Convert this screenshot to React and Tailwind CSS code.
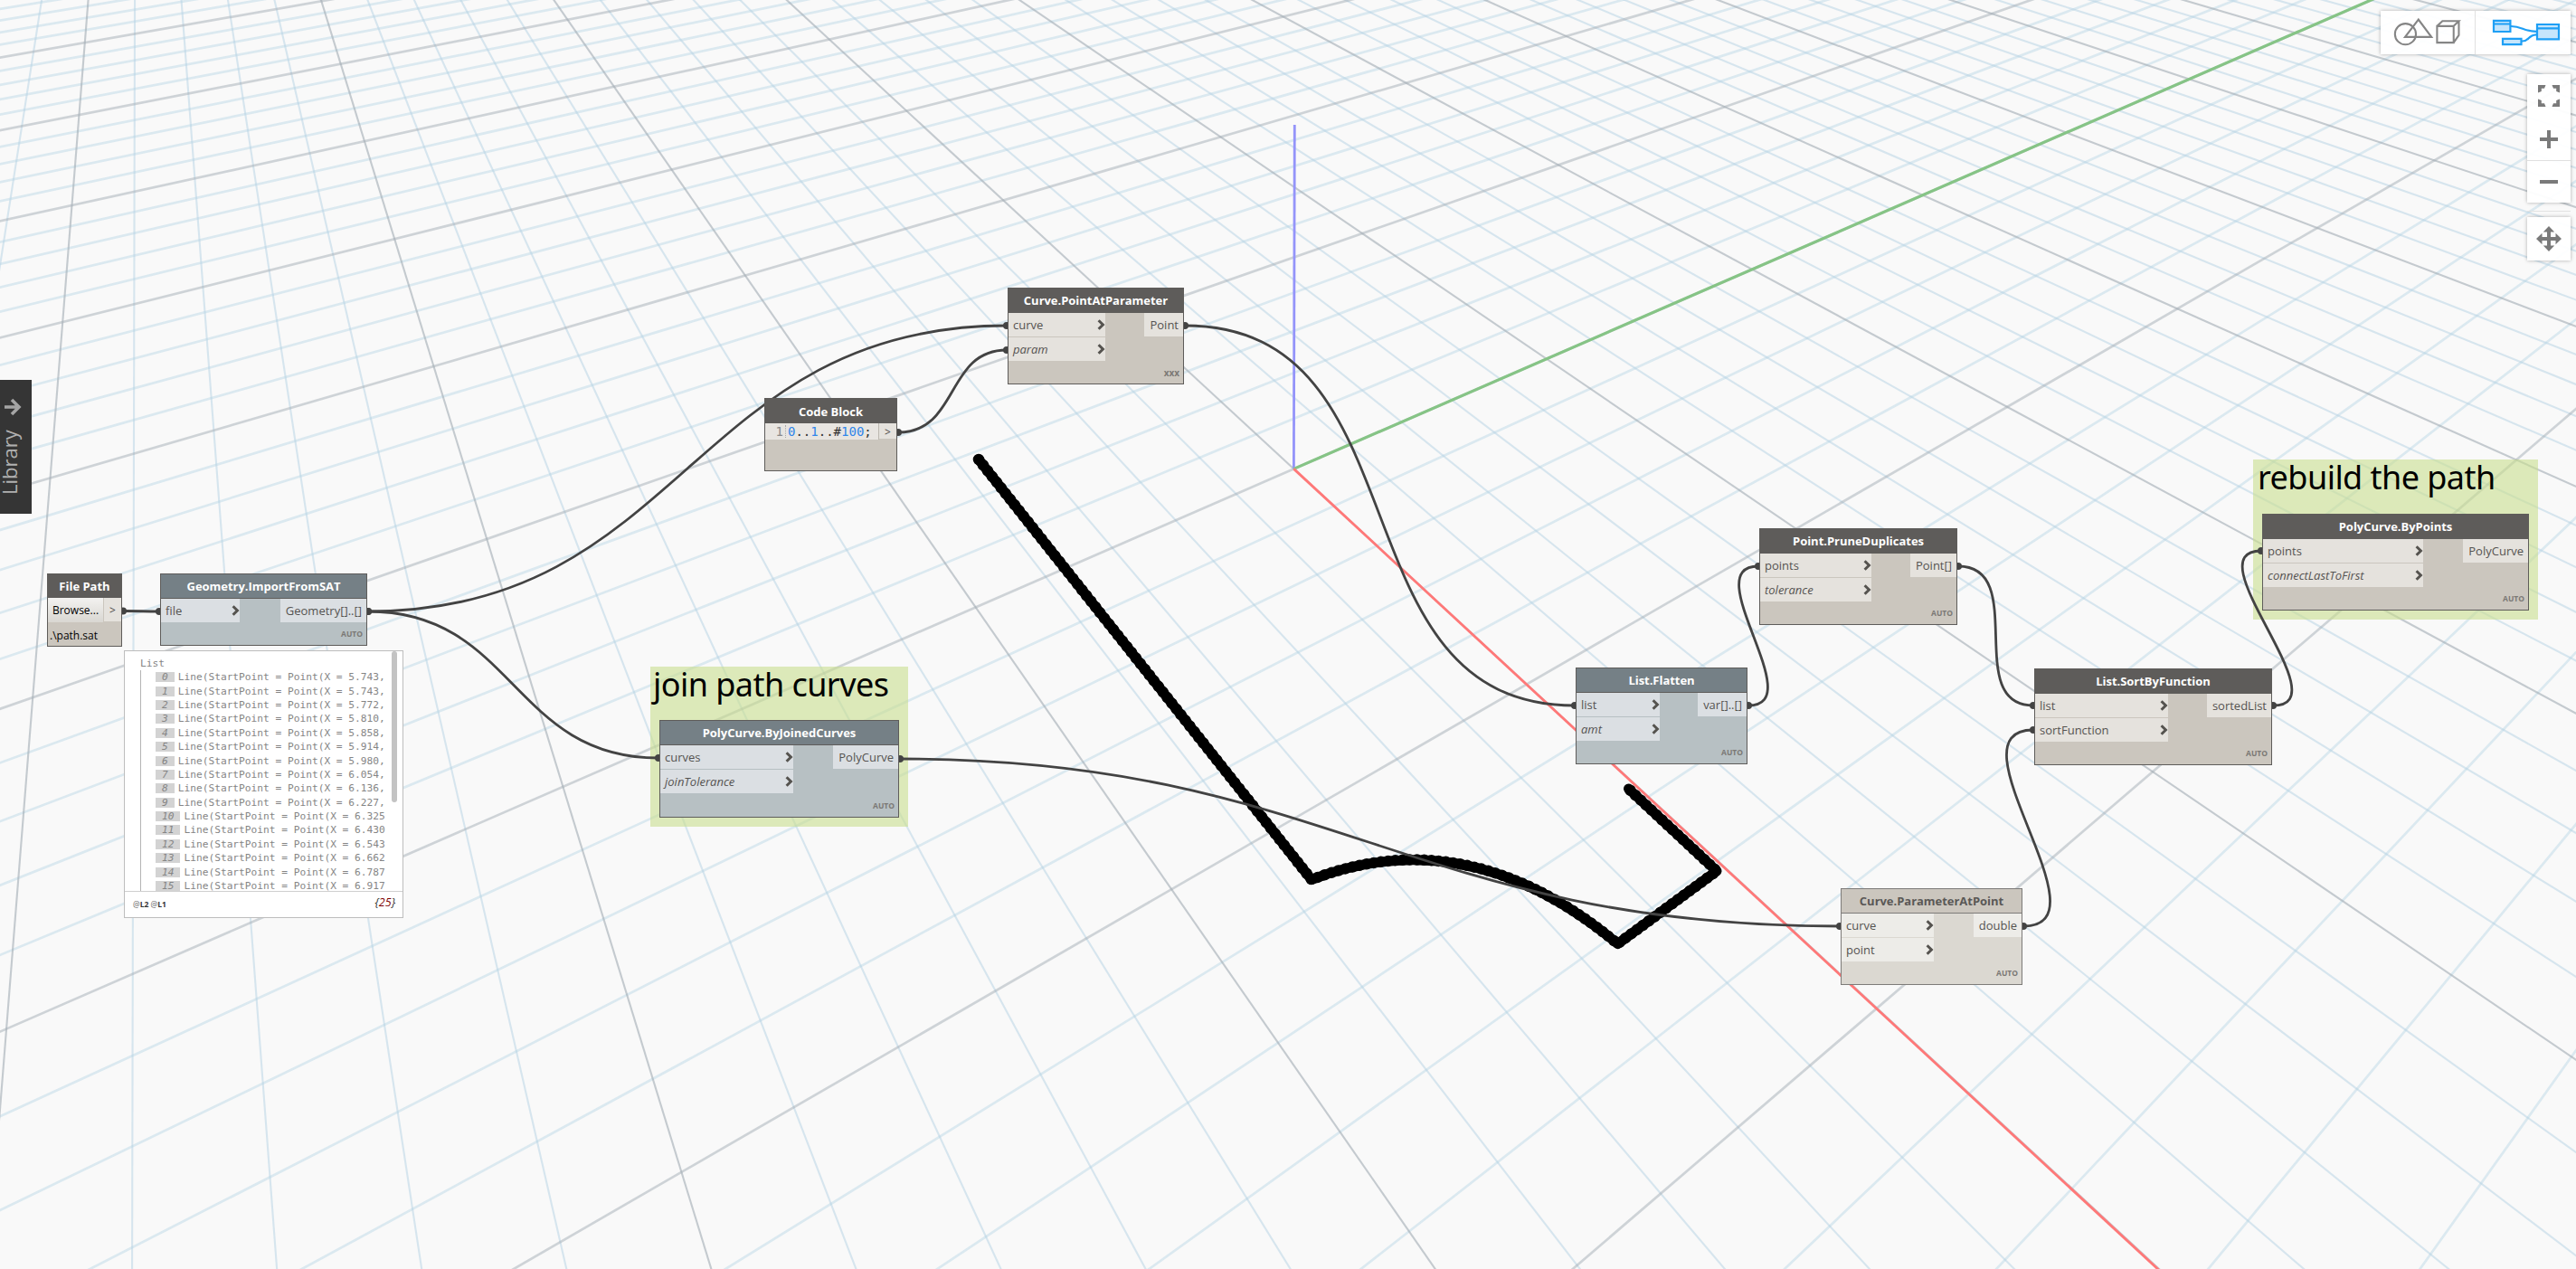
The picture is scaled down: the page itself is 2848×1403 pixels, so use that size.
import React from "react";

/* ---------- perspective ground grid ---------- */
const O = [1430.4, 518.4];
const U = { x: -5.04, y: 22.28, w: -0.0335 };
const V = { x: 95.05, y: -15.227, w: 0.0229 };

function ray(px, py, vx, vy) {
  const k = 30;
  return { x1: vx, y1: vy, x2: vx + (px - vx) * k, y2: vy + (py - vy) * k };
}

function buildGrid() {
  const lines = [];
  const vpU = [U.x / U.w, U.y / U.w];
  const vpV = [V.x / V.w, V.y / V.w];
  for (let i = -80; i <= 80; i++) {
    const major = i % 5 === 0;
    const u = (-V.w * i) / U.w;
    lines.push({
      ...ray(O[0] + U.x * u + V.x * i, O[1] + U.y * u + V.y * i, vpU[0], vpU[1]),
      major,
      width: 2.1,
      opacity: major ? 0.62 : 0.5,
      id: "v" + i,
    });
    const v = (-U.w * i) / V.w;
    lines.push({
      ...ray(O[0] + U.x * i + V.x * v, O[1] + U.y * i + V.y * v, vpV[0], vpV[1]),
      major,
      width: 2.7,
      opacity: major ? 0.5 : 0.43,
      id: "u" + i,
    });
  }
  return lines;
}

const GRID = buildGrid();
const SEGMENTS = GRID.filter((l) => !l.major).concat(GRID.filter((l) => l.major));

const TOOLPATH =
  "M1082 508L1450 972.5C1545 936 1660 936 1788.500 1043.500L1898 963L1800.500 872";

const WIRES = [
  [136, 675.5, 176, 676],
  [407, 676, 1113, 360],
  [407, 676, 728, 838],
  [995, 839, 2034, 1024],
  [993, 478, 1113, 387],
  [1310, 360, 1741, 780],
  [1933, 780, 1944, 626],
  [2165, 626, 2248, 780],
  [2237, 1024, 2248, 807],
  [2513, 780, 2500, 609],
];

function wirePath([x1, y1, x2, y2]) {
  const k = 0.45 * Math.hypot(x2 - x1, y2 - y1);
  return `M${x1} ${y1}C${x1 + k} ${y1} ${x2 - k} ${y2} ${x2} ${y2}`;
}

function Scene() {
  return (
    <svg className="absolute inset-0" width="2848" height="1403" viewBox="0 0 2848 1403">
      {SEGMENTS.map((l) => (
        <line
          key={l.id}
          x1={l.x1}
          y1={l.y1}
          x2={l.x2}
          y2={l.y2}
          stroke={l.major ? "#a3adb5" : "#b3d2e3"}
          strokeOpacity={l.opacity}
          strokeWidth={l.width}
        />
      ))}
      <line x1="1431.3" y1="138" x2="1430.4" y2="518" stroke="#9494fa" strokeWidth="2.8" />
      <line x1="1430.4" y1="518.4" x2="2626" y2="-2" stroke="#86c486" strokeWidth="3.2" />
      <line x1="1430.4" y1="518.4" x2="2391" y2="1408" stroke="#ff7878" strokeWidth="2.8" />
      <g fill="none" stroke="#000" strokeLinecap="round" strokeLinejoin="round">
        <path d={TOOLPATH} strokeWidth="11" />
        <path d={TOOLPATH} strokeWidth="12.5" strokeDasharray="0 8" />
      </g>
    </svg>
  );
}

function Wires() {
  return (
    <svg className="absolute inset-0" width="2848" height="1403" viewBox="0 0 2848 1403">
      {WIRES.map((w, i) => (
        <g key={i}>
          <path d={wirePath(w)} fill="none" stroke="#434343" strokeWidth="2.8" />
          <circle cx={w[0]} cy={w[1]} r="4" fill="#434343" />
          <circle cx={w[2]} cy={w[3]} r="4" fill="#434343" />
        </g>
      ))}
    </svg>
  );
}

/* ---------- nodes ---------- */
const TONES = {
  dark: {
    frame: "border-[#5e5c5a] bg-[#cbc6be]",
    head: "bg-[#5e5c5a] text-white border-[#5e5c5a]",
    port: "bg-[#e5e2dd]",
  },
  slate: {
    frame: "border-[#5e5c5a] bg-[#b7c0c3]",
    head: "bg-[#758086] text-white border-[#5e5c5a]",
    port: "bg-[#dbdfe3]",
  },
  pale: {
    frame: "border-[#7d7b79] bg-[#dbd8d1]",
    head: "bg-[#cbc6be] text-[#5a5856] border-[#7d7b79]",
    port: "bg-[#edece8]",
  },
};

function Chevron() {
  return (
    <svg width="9" height="12" viewBox="0 0 9 12" className="mt-[-1px] shrink-0">
      <path d="M1.6 1.2L6.4 6L1.6 10.8" fill="none" stroke="#55534f" strokeWidth="3" />
    </svg>
  );
}

function Node({ pos, tone = "dark", title, inputs, inW, output, lacing = "AUTO" }) {
  const t = TONES[tone];
  return (
    <section className={`absolute flex flex-col border ${pos} ${t.frame}`}>
      <h2
        className={`flex h-[27px] shrink-0 items-center justify-center border-b pt-px text-[13px] font-bold leading-none tracking-[-0.03px] whitespace-nowrap ${t.head}`}
      >
        {title}
      </h2>
      <div className="flex items-start justify-between text-[13px] leading-none text-[#555351]">
        <div className={`flex flex-col gap-px ${inW}`}>
          {inputs.map((p) => (
            <div key={p.name} className={`flex h-[26px] items-center justify-between pl-[5px] ${t.port}`}>
              <span className={p.opt ? "pt-px italic" : "pt-px"}>{p.name}</span>
              <Chevron />
            </div>
          ))}
        </div>
        <div className={`flex h-[26px] items-center pr-[5px] pl-[6px] pt-px ${t.port}`}>{output}</div>
      </div>
      <div
        className={`mt-auto flex h-[24px] items-center justify-end pr-1 font-bold text-[#7b7975] ${
          lacing === "AUTO" ? "text-[8.5px]" : "text-[10px]"
        }`}
      >
        {lacing}
      </div>
    </section>
  );
}

const Group = ({ pos, children }) => (
  <div
    className={`absolute bg-[#c8dd8e]/60 font-['Noto_Sans',sans-serif] text-[36px] leading-[39px] tracking-[-0.55px] whitespace-nowrap text-black ${pos}`}
  >
    {children}
  </div>
);

const VALUES = [
  "5.743,", "5.743,", "5.772,", "5.810,", "5.858,", "5.914,", "5.980,", "6.054,",
  "6.136,", "6.227,", "6.325", "6.430", "6.543", "6.662", "6.787", "6.917",
];

function Preview() {
  return (
    <aside className="absolute left-[137px] top-[719px] flex h-[296px] w-[309px] flex-col border border-[#bdbdbd] bg-white font-['DejaVu_Sans_Mono',monospace] text-[11.2px] text-[#858585]">
      <div className="flex h-[266px] justify-between overflow-hidden border-b border-[#cfcfcf] pl-[17px] pr-[6px]">
        <div className="pt-[6px]">
          <div className="h-[15px] leading-[15px]">List</div>
          <div className="h-[244px] border-l border-[#b4b4b4] pl-4">
            {VALUES.map((v, i) => (
              <div key={i} className="flex h-[15.4px] items-center leading-[15px] whitespace-pre">
                <span className="mr-[4px] flex h-[11px] items-center bg-[#d3d3d3] px-[7px] italic">{i}</span>
                {"Line(StartPoint = Point(X = " + v}
              </div>
            ))}
          </div>
        </div>
        <div className="h-[167px] w-[6px] rounded-full bg-[#c3c3c3]" />
      </div>
      <div className="flex flex-1 items-center justify-between pr-[8px] pl-[9px] font-['Open_Sans',sans-serif]">
        <span className="text-[8.5px] font-bold text-[#333]">
          <span className="font-normal text-[#666]">@</span>L2 <span className="font-normal text-[#666]">@</span>L1
        </span>
        <span className="pb-[3px] text-[12.5px] italic text-[#333]">
          {"{"}
          <span className="text-[#7d0000]">25</span>
          {"}"}
        </span>
      </div>
    </aside>
  );
}

function FilePath() {
  return (
    <section className="absolute left-[52px] top-[634px] flex h-[81px] w-[83px] flex-col border border-[#5e5c5a] bg-[#cbc6be]">
      <h2 className="flex h-[26px] items-center justify-center bg-[#5e5c5a] text-[13px] font-bold leading-none text-white">
        File Path
      </h2>
      <div className="flex h-[27px] gap-px">
        <button className="h-[27px] w-[61px] bg-linear-to-b from-[#f3f2f0] to-[#d9d7d2] text-[12px] leading-none text-black">
          Browse...
        </button>
        <div className="flex h-[26px] flex-1 items-center justify-center bg-[#e5e2dd] pt-[2px] text-[12px] leading-none text-[#4a4846]">
          &gt;
        </div>
      </div>
      <div className="pl-[2px] pt-[6px] text-[12px] leading-[18px] text-black">.\path.sat</div>
    </section>
  );
}

function CodeBlock() {
  return (
    <section className="absolute left-[845px] top-[440px] flex h-[81px] w-[147px] flex-col border border-[#5e5c5a] bg-[#cbc6be]">
      <h2 className="flex h-[27px] items-center justify-center bg-[#5e5c5a] pt-[2px] text-[13px] font-bold leading-none text-white">
        Code Block
      </h2>
      <div className="flex items-start">
        <div className="flex h-[18px] w-[126px] items-center border-r border-[#bbb7b0] bg-[#e8e5e1] font-['DejaVu_Sans_Mono',monospace] text-[14px] leading-none text-[#333]">
          <span className="w-[23px] border-r border-dotted border-[#aaa] pr-[2px] text-right text-[#8a8a8a]">1</span>
          <span className="pl-[2px] whitespace-pre">
            <span className="text-[#2f86ea]">0</span>..<span className="text-[#2f86ea]">1</span>..#
            <span className="text-[#2f86ea]">100</span>;
          </span>
        </div>
        <div className="flex h-[17px] flex-1 items-center justify-center bg-[#e5e2dd] pt-[2px] text-[12px] leading-none text-[#4a4846]">
          &gt;
        </div>
      </div>
    </section>
  );
}

/* ---------- chrome ---------- */
function LibraryTab() {
  return (
    <div className="absolute left-0 top-[420px] flex h-[148px] w-[35px] flex-col items-start bg-[#353535] pt-[20px]">
      <svg width="20" height="20" viewBox="0 0 20 20" className="ml-[4px]">
        <path d="M1 10H16M9 2L17 10L9 18" fill="none" stroke="#a5a5a5" strokeWidth="3.6" />
      </svg>
      <div className="mt-[9px] ml-[-2px] h-[78px] w-[24px] rotate-180 text-[22px] leading-[24px] text-[#b0b0b0] [writing-mode:vertical-rl]">
        Library
      </div>
    </div>
  );
}

const Panel = ({ className, children }) => (
  <div className={`flex bg-white/95 shadow-[0_0_4px_rgba(0,0,0,0.3)] ${className}`}>{children}</div>
);

function ViewToolbar() {
  return (
    <div className="absolute right-[6px] top-[12px] flex flex-col items-end">
      <Panel className="h-[48px] w-[210px]">
        <div className="flex w-[105px] items-center justify-center border-r border-[#e0e0e0]">
          <svg width="105" height="48" viewBox="2632 12 105 48" fill="none" stroke="#858585" strokeWidth="2.1">
            <circle cx="2659.7" cy="37.7" r="11.7" />
            <path d="M2674.2 21.5L2659.3 41H2688.7Z" strokeWidth="2.2" />
            <path d="M2695 28.8H2713.5V47.2H2695ZM2695 28.8L2701 23.2H2719.3L2713.5 28.8M2719.3 23.2V39L2713.5 47.2" />
          </svg>
        </div>
        <div className="flex w-[105px] items-center justify-center">
          <svg width="105" height="48" viewBox="2737 12 105 48" fill="#c5e5fc" stroke="#1e9ff5" strokeWidth="2.2">
            <path d="M2757 22.8H2775.4V35H2757ZM2757 26.5H2775.4" />
            <path d="M2805 27H2829V43.3H2805ZM2805 31.3H2829" />
            <path d="M2767 42.8H2787.5V49.2H2767Z" />
            <path d="M2776 29C2789 29 2789 34.5 2804 34.8M2788 45.5C2797 46 2794 39 2804 38.3" fill="none" />
          </svg>
        </div>
      </Panel>
      <Panel className="mt-[22px] h-[142px] w-[48px] flex-col">
        <svg width="48" height="95" viewBox="2794 82 48 95" fill="#7a7a7a">
          <path d="M2806 94h8.500l-1.500 3.800h-3.200v3.200l-3.800 1.500zM2830 94h-8.500l1.500 3.800h3.200v3.200l3.800 1.500zM2806 118h8.500l-1.500-3.800h-3.200v-3.200l-3.800-1.500zM2830 118h-8.500l1.500-3.800h3.200v-3.200l3.800-1.500z" />
          <path d="M2816 144h4v8h8v4h-8v8h-4v-8h-8v-4h8z" />
        </svg>
        <div className="flex h-[47px] items-center justify-center border-t border-[#e0e0e0] pb-px">
          <div className="h-[4px] w-[20px] bg-[#7a7a7a]" />
        </div>
      </Panel>
      <div className="mt-[9px] mb-[6px] h-px w-[48px] bg-[#e2e2e2]" />
      <Panel className="h-[48px] w-[48px]">
        <svg width="48" height="48" viewBox="2794 240 48 48" fill="#7a7a7a">
          <path d="M2818 250l6.200 6.500h-4.200v5.500h5.500v-4.200l6.500 6.200l-6.500 6.200v-4.200h-5.500v5.500h4.200l-6.200 6.500l-6.200-6.500h4.200v-5.500h-5.500v4.200l-6.500-6.200l6.500-6.200v4.200h5.500v-5.500h-4.200z" />
        </svg>
      </Panel>
    </div>
  );
}

export default function App() {
  return (
    <main className="relative h-[1403px] w-[2848px] overflow-hidden bg-[#f9f9f9] font-['Open_Sans','Noto_Sans',sans-serif]">
      <Scene />
      <Group pos="left-[719px] top-[737px] h-[177px] w-[285px] pl-[3px]">join path curves</Group>
      <Group pos="left-[2491px] top-[508px] h-[177px] w-[315px] pl-[5px]">rebuild the path</Group>
      <Wires />
      <FilePath />
      <Node
        pos="left-[177px] top-[634px] w-[229px] h-[80px]"
        tone="slate"
        title="Geometry.ImportFromSAT"
        inW="w-[87px]"
        inputs={[{ name: "file" }]}
        output="Geometry[]..[]"
      />
      <Preview />
      <CodeBlock />
      <Node
        pos="left-[1114px] top-[318px] w-[195px] h-[107px]"
        title="Curve.PointAtParameter"
        inW="w-[107px]"
        inputs={[{ name: "curve" }, { name: "param", opt: true }]}
        output="Point"
        lacing="xxx"
      />
      <Node
        pos="left-[729px] top-[796px] w-[265px] h-[108px]"
        tone="slate"
        title="PolyCurve.ByJoinedCurves"
        inW="w-[147px]"
        inputs={[{ name: "curves" }, { name: "joinTolerance", opt: true }]}
        output="PolyCurve"
      />
      <Node
        pos="left-[1742px] top-[738px] w-[190px] h-[107px]"
        tone="slate"
        title="List.Flatten"
        inW="w-[92px]"
        inputs={[{ name: "list" }, { name: "amt", opt: true }]}
        output="var[]..[]"
      />
      <Node
        pos="left-[1945px] top-[584px] w-[219px] h-[107px]"
        title="Point.PruneDuplicates"
        inW="w-[123px]"
        inputs={[{ name: "points" }, { name: "tolerance", opt: true }]}
        output="Point[]"
      />
      <Node
        pos="left-[2249px] top-[739px] w-[263px] h-[107px]"
        title="List.SortByFunction"
        inW="w-[147px]"
        inputs={[{ name: "list" }, { name: "sortFunction" }]}
        output="sortedList"
      />
      <Node
        pos="left-[2035px] top-[982px] w-[201px] h-[107px]"
        tone="pale"
        title="Curve.ParameterAtPoint"
        inW="w-[102px]"
        inputs={[{ name: "curve" }, { name: "point" }]}
        output="double"
      />
      <Node
        pos="left-[2501px] top-[568px] w-[295px] h-[107px]"
        title="PolyCurve.ByPoints"
        inW="w-[177px]"
        inputs={[{ name: "points" }, { name: "connectLastToFirst", opt: true }]}
        output="PolyCurve"
      />
      <LibraryTab />
      <ViewToolbar />
    </main>
  );
}
